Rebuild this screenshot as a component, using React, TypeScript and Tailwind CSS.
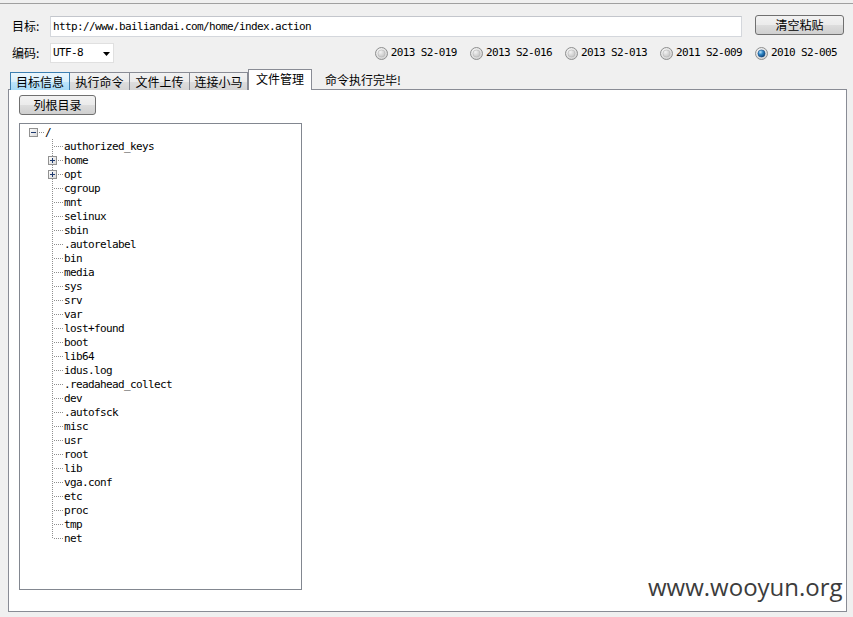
import React from "react";

const CJK = "font-['Noto_Sans_CJK_SC',sans-serif]";
const MONO = "font-['DejaVu_Sans_Mono',monospace] text-[11px] tracking-[-0.62px]";

const BTN =
  "flex items-center justify-center rounded-[3px] border border-[#707070] bg-[linear-gradient(to_bottom,#f2f2f2_0%,#ebebeb_50%,#dddddd_51%,#cfcfcf_100%)] text-[12px] leading-[14px] text-black";

const RADIOS = [
  { label: "2013 S2-019", checked: false },
  { label: "2013 S2-016", checked: false },
  { label: "2013 S2-013", checked: false },
  { label: "2011 S2-009", checked: false },
  { label: "2010 S2-005", checked: true },
];

const TABS = ["目标信息", "执行命令", "文件上传", "连接小马"];

const ENTRIES: { name: string; expandable?: boolean }[] = [
  { name: "authorized_keys" },
  { name: "home", expandable: true },
  { name: "opt", expandable: true },
  { name: "cgroup" },
  { name: "mnt" },
  { name: "selinux" },
  { name: "sbin" },
  { name: ".autorelabel" },
  { name: "bin" },
  { name: "media" },
  { name: "sys" },
  { name: "srv" },
  { name: "var" },
  { name: "lost+found" },
  { name: "boot" },
  { name: "lib64" },
  { name: "idus.log" },
  { name: ".readahead_collect" },
  { name: "dev" },
  { name: ".autofsck" },
  { name: "misc" },
  { name: "usr" },
  { name: "root" },
  { name: "lib" },
  { name: "vga.conf" },
  { name: "etc" },
  { name: "proc" },
  { name: "tmp" },
  { name: "net" },
];

function Radio({ checked, id }: { checked: boolean; id: string }) {
  return (
    <svg width="13" height="13" viewBox="0 0 13 13" className="shrink-0">
      <defs>
        <radialGradient id={`ro-${id}`} cx="0.4" cy="0.35" r="0.7">
          <stop offset="0" stopColor="#ffffff" />
          <stop offset="1" stopColor="#cfcfcf" />
        </radialGradient>
        <radialGradient id={`ri-${id}`} cx="0.35" cy="0.3" r="0.75">
          {checked ? (
            <>
              <stop offset="0" stopColor="#b9e3fb" />
              <stop offset="0.45" stopColor="#2f86c6" />
              <stop offset="1" stopColor="#0c3f74" />
            </>
          ) : (
            <>
              <stop offset="0" stopColor="#f3f3f3" />
              <stop offset="1" stopColor="#c4c4c4" />
            </>
          )}
        </radialGradient>
      </defs>
      <circle cx="6.5" cy="6.5" r="6" fill={`url(#ro-${id})`} stroke="#8e8f8f" />
      <circle cx="6.5" cy="6.5" r="3.6" fill={`url(#ri-${id})`} stroke={checked ? "#1b4f86" : "#b5b5b5"} strokeWidth="0.6" />
    </svg>
  );
}

function ExpandBox({ plus }: { plus: boolean }) {
  return (
    <g shapeRendering="crispEdges">
      <rect x="0.5" y="3.5" width="8" height="8" fill="url(#boxfill)" stroke="#919191" />
      <rect x="2" y="7" width="5" height="1" fill="#1e3a6e" />
      {plus && <rect x="4" y="5" width="1" height="5" fill="#1e3a6e" />}
    </g>
  );
}

function BoxDefs() {
  return (
    <svg width="0" height="0" className="absolute">
      <defs>
        <linearGradient id="boxfill" x1="0" y1="0" x2="1" y2="1">
          <stop offset="0" stopColor="#ffffff" />
          <stop offset="1" stopColor="#d6d6d6" />
        </linearGradient>
      </defs>
    </svg>
  );
}

function Connector({ last, expandable }: { last?: boolean; expandable?: boolean }) {
  const dots: React.ReactNode[] = [];
  for (let y = 0; y < (last ? 8 : 14); y += 2) dots.push(<rect key={`v${y}`} x={4} y={y} width={1} height={1} />);
  for (let x = 6; x < 15; x += 2) dots.push(<rect key={`h${x}`} x={x} y={7} width={1} height={1} />);
  return (
    <svg width="16" height="14" viewBox="0 0 16 14" className="shrink-0" shapeRendering="crispEdges">
      <g fill="#8f8f8f">{dots}</g>
      {expandable && <ExpandBox plus />}
    </svg>
  );
}

function Tree() {
  return (
    <div className="h-[467px] w-[283px] border border-[#828790] bg-white pt-px">
      <div className="flex h-[14px] items-center pl-[9px]">
        <svg width="16" height="14" viewBox="0 0 16 14" className="shrink-0" shapeRendering="crispEdges">
          <g fill="#8f8f8f">
            <rect x="10" y="7" width="1" height="1" />
            <rect x="12" y="7" width="1" height="1" />
            <rect x="14" y="7" width="1" height="1" />
          </g>
          <ExpandBox plus={false} />
        </svg>
        <span className={`${MONO} self-start pt-px leading-[14px] text-black`}>/</span>
      </div>
      {ENTRIES.map((e, i) => (
        <div key={e.name} className="flex h-[14px] items-center pl-[28px]">
          <Connector last={i === ENTRIES.length - 1} expandable={e.expandable} />
          <span className={`${MONO} self-start pt-px leading-[14px] text-black`}>{e.name}</span>
        </div>
      ))}
    </div>
  );
}

export default function App() {
  return (
    <div className={`relative h-[617px] w-[853px] overflow-hidden bg-[#f0f0f0] ${CJK} text-[12px] text-black`}>
      <BoxDefs />
      <div className="h-[3px]" />
      <div className="border-t border-[#a0a0a0]" />

      {/* 目标 */}
      <div className="mt-[11px] flex items-start pl-[12px]">
        <span className="w-[38px] leading-[22px]">目标:</span>
        <div className="mt-px flex h-[21px] w-[692px] items-center border border-[#d4d7dc] border-t-[#c3c6cc] bg-white pl-[2px]">
          <span className={`${MONO} leading-[14px]`}>http://www.bailiandai.com/home/index.action</span>
        </div>
        <button type="button" className={`${BTN} ml-[13px] h-[20px] w-[89px]`}>
          清空粘贴
        </button>
      </div>

      {/* 编码 + payloads */}
      <div className="mt-[6px] flex h-[20px] items-center pl-[12px] pr-[16px]">
        <span className="w-[38px] leading-[14px]">编码:</span>
        <div className="flex h-[20px] w-[64px] items-center justify-between border border-[#e0e0e0] bg-white pl-[2px] pr-[3px]">
          <span className={`${MONO} leading-[14px]`}>UTF-8</span>
          <svg width="7" height="4" viewBox="0 0 7 4" className="mt-px">
            <path d="M0 0H7L3.5 4Z" fill="#000" />
          </svg>
        </div>
        <div className="ml-auto flex items-center gap-[13px]">
          {RADIOS.map((r, i) => (
            <label key={r.label} className="flex items-center gap-[3px]">
              <Radio checked={r.checked} id={String(i)} />
              <span className={`${MONO} leading-[14px] whitespace-pre`}>{r.label}</span>
            </label>
          ))}
        </div>
      </div>

      {/* tabs */}
      <div className="mt-[6px] flex h-[21px] items-end pl-[10px]">
        <div className="flex h-[18px] w-[60px] justify-center border border-b-0 border-[#3c7fb1] bg-[linear-gradient(to_bottom,#eaf6fd_0%,#d9f0fc_50%,#bee6fd_51%,#a7d9f5_100%)] pt-px leading-[15px]">
          {TABS[0]}
        </div>
        {TABS.slice(1).map((t, i) => (
          <div
            key={t}
            className={`flex h-[18px] ${i === 2 ? "w-[58px]" : "w-[60px]"} justify-center border border-b-0 border-l-0 border-[#898c95] bg-[linear-gradient(to_bottom,#f2f2f2_0%,#ebebeb_50%,#dddddd_51%,#d4d4d4_100%)] pt-px leading-[15px]`}
          >
            {t}
          </div>
        ))}
        <div className="relative z-10 flex h-[21px] w-[64px] justify-center border border-b-0 border-[#898c95] bg-white pt-px leading-[15px]">
          文件管理
        </div>
        <span className="ml-[13px] self-center leading-[14px]">命令执行完毕!</span>
      </div>

      {/* panel */}
      <div className="-mt-px ml-[8px] h-[523px] w-[839px] border border-[#898c95] bg-white pl-[10px] pt-[5px]">
        <button type="button" className={`${BTN} h-[20px] w-[77px]`}>
          列根目录
        </button>
        <div className="mt-[8px]">
          <Tree />
        </div>
      </div>

      <span className="absolute left-[648px] top-[575px] font-['Open_Sans',sans-serif] text-[24px] leading-[24px] text-[#3c3c3c]">
        www.wooyun.org
      </span>
    </div>
  );
}
